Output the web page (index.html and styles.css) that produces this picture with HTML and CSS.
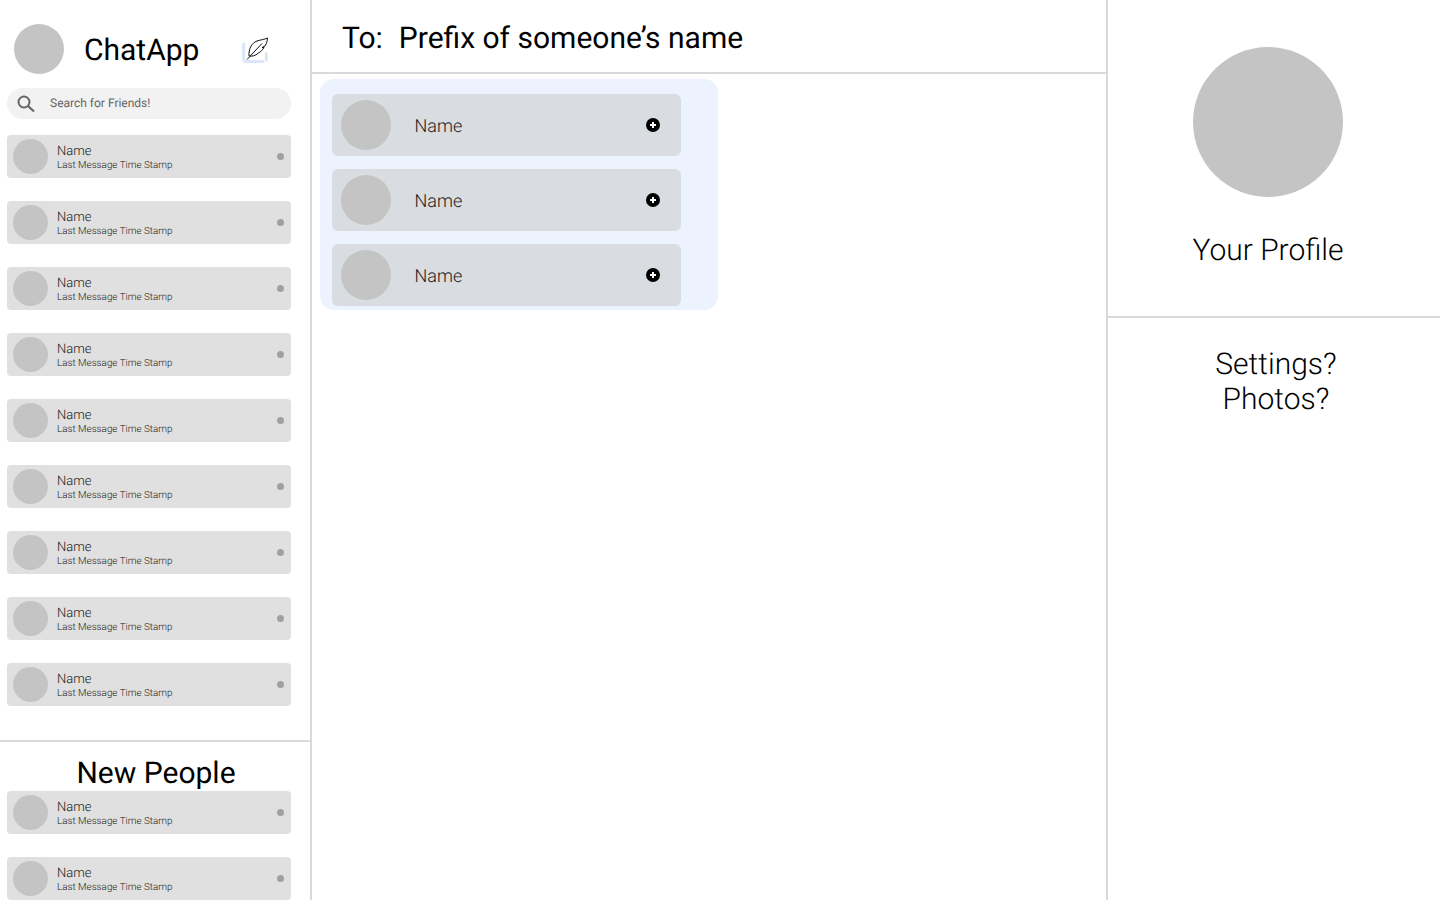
FILE: index.html
```html
<!DOCTYPE html>
<html lang="en">
<head>
    <meta charset="UTF-8">
    <meta name="viewport" content="width=device-width, initial-scale=1.0">
    <title>ChatApp</title>
    <link rel="stylesheet" href="styles.css">
</head>
<body>
    <div class="app">
        <aside class="sidebar">
            <div class="friends">
                <div class="brand">
                    <div class="avatar avatar-brand"></div>
                    <h1>ChatApp</h1>
                    <button class="compose" aria-label="New message">
                        <svg width="30" height="30" viewBox="0 0 30 30" fill="none">
                            <path d="M3.700 10V25.500Q3.700 27.500 5.700 27.500H23" stroke="#dbe6f8" stroke-width="3" stroke-linecap="round"/>
                            <path d="M26.300 19.500V26" stroke="#dbe6f8" stroke-width="3" stroke-linecap="round"/>
                            <path d="M7 25.500L22 9.500" stroke="#111" stroke-width="1"/>
                            <path d="M9 22C8.500 15 11.500 9 17 7C20.500 5.800 24.500 5.500 27.500 4C27.300 7 26.500 9.500 25 12L22 13.500H24C22.500 16 21 17.500 18.500 19C15 22 12 22.500 9 22Z" stroke="#111" stroke-width="1" stroke-linejoin="round"/>
                        </svg>
                    </button>
                </div>
                <div class="search">
                    <svg width="20" height="20" viewBox="0 0 20 20" fill="none">
                        <circle cx="8" cy="8" r="5.500" stroke="#666" stroke-width="2"/>
                        <path d="M12 12L18 17.500" stroke="#666" stroke-width="2.200"/>
                    </svg>
                    <span>Search for Friends!</span>
                </div>
                <ul class="chat-list">
                    <li class="chat-row"><div class="avatar"></div><div class="chat-text"><div class="chat-name">Name</div><div class="chat-last">Last Message Time Stamp</div></div><div class="dot"></div></li>
                    <li class="chat-row"><div class="avatar"></div><div class="chat-text"><div class="chat-name">Name</div><div class="chat-last">Last Message Time Stamp</div></div><div class="dot"></div></li>
                    <li class="chat-row"><div class="avatar"></div><div class="chat-text"><div class="chat-name">Name</div><div class="chat-last">Last Message Time Stamp</div></div><div class="dot"></div></li>
                    <li class="chat-row"><div class="avatar"></div><div class="chat-text"><div class="chat-name">Name</div><div class="chat-last">Last Message Time Stamp</div></div><div class="dot"></div></li>
                    <li class="chat-row"><div class="avatar"></div><div class="chat-text"><div class="chat-name">Name</div><div class="chat-last">Last Message Time Stamp</div></div><div class="dot"></div></li>
                    <li class="chat-row"><div class="avatar"></div><div class="chat-text"><div class="chat-name">Name</div><div class="chat-last">Last Message Time Stamp</div></div><div class="dot"></div></li>
                    <li class="chat-row"><div class="avatar"></div><div class="chat-text"><div class="chat-name">Name</div><div class="chat-last">Last Message Time Stamp</div></div><div class="dot"></div></li>
                    <li class="chat-row"><div class="avatar"></div><div class="chat-text"><div class="chat-name">Name</div><div class="chat-last">Last Message Time Stamp</div></div><div class="dot"></div></li>
                    <li class="chat-row"><div class="avatar"></div><div class="chat-text"><div class="chat-name">Name</div><div class="chat-last">Last Message Time Stamp</div></div><div class="dot"></div></li>
                </ul>
            </div>
            <div class="new-people">
                <h2>New People</h2>
                <ul class="chat-list">
                    <li class="chat-row"><div class="avatar"></div><div class="chat-text"><div class="chat-name">Name</div><div class="chat-last">Last Message Time Stamp</div></div><div class="dot"></div></li>
                    <li class="chat-row"><div class="avatar"></div><div class="chat-text"><div class="chat-name">Name</div><div class="chat-last">Last Message Time Stamp</div></div><div class="dot"></div></li>
                </ul>
            </div>
        </aside>

        <main class="compose-pane">
            <header class="to-bar">
                <span class="to-label">To:</span>
                <span class="to-value">Prefix of someone’s name</span>
            </header>
            <ul class="suggestions">
                <li class="suggestion"><div class="avatar avatar-large"></div><span class="suggestion-name">Name</span><span class="add-icon"></span></li>
                <li class="suggestion"><div class="avatar avatar-large"></div><span class="suggestion-name">Name</span><span class="add-icon"></span></li>
                <li class="suggestion"><div class="avatar avatar-large"></div><span class="suggestion-name">Name</span><span class="add-icon"></span></li>
            </ul>
        </main>

        <aside class="details">
            <section class="profile">
                <div class="avatar avatar-profile"></div>
                <h2>Your Profile</h2>
            </section>
            <section class="extras">Settings?<br>Photos?</section>
        </aside>
    </div>
</body>
</html>
```

FILE: styles.css
```css
* {
    box-sizing: border-box;
}

html, body {
    height: 100%;
    margin: 0;
    overflow: hidden;
}

body {
    font-family: Roboto, Arial, sans-serif;
    background-color: #fff;
    color: #000;
    text-rendering: geometricPrecision;
}

ul {
    list-style-type: none;
    margin: 0;
    padding: 0;
}

h1, h2 {
    margin: 0;
    font-weight: 400;
}

.app {
    display: flex;
    height: 900px;
}

.avatar {
    flex: none;
    width: 35px;
    height: 35px;
    border-radius: 50%;
    background-color: #c4c4c4;
}

/* left column */
.sidebar {
    flex: none;
    display: flex;
    flex-direction: column;
    width: 312px;
    border-right: 2px solid #d9d9d9;
}

.friends {
    flex: none;
    height: 742px;
    padding: 24px 19px 0 7px;
    border-bottom: 2px solid #d9d9d9;
}

.brand {
    display: flex;
    align-items: center;
    height: 50px;
    padding-left: 7px;
}

.avatar-brand {
    width: 50px;
    height: 50px;
}

.brand h1 {
    margin-left: 20px;
    padding-top: 4px;
    font-size: 30px;
    line-height: 50px;
}

.compose {
    margin-left: 41px;
    padding: 0;
    border: none;
    background: none;
    line-height: 0;
}

.search {
    display: flex;
    align-items: center;
    height: 31px;
    margin-top: 14px;
    padding-left: 9px;
    border-radius: 16px;
    background-color: #f2f2f2;
    color: #666;
    font-size: 12px;
}

.search span {
    margin-left: 14px;
    padding-bottom: 2px;
}

.chat-list {
    display: flex;
    flex-direction: column;
    gap: 23px;
}

.friends .chat-list {
    margin-top: 16px;
}

.chat-row {
    flex: none;
    display: flex;
    align-items: center;
    height: 43px;
    padding: 0 7px 0 6px;
    border-radius: 4px;
    background-color: #e0e0e0;
}

.chat-text {
    flex: 1;
    margin-left: 9px;
    padding-top: 3px;
    color: #1a1a1a;
    font-weight: 300;
}

.chat-name {
    font-size: 13px;
    line-height: 15px;
}

.chat-last {
    margin-top: 1px;
    font-size: 9.850px;
    line-height: 12px;
}

.dot {
    width: 7px;
    height: 7px;
    border-radius: 50%;
    background-color: #a0a0a0;
}

.new-people {
    padding: 0 19px 0 7px;
}

.new-people h2 {
    height: 49px;
    padding: 14px 0 0 14px;
    font-size: 30px;
    line-height: 35px;
    text-align: center;
}

/* middle column */
.compose-pane {
    flex: none;
    width: 796px;
    border-right: 2px solid #d9d9d9;
}

.to-bar {
    display: flex;
    align-items: center;
    height: 74px;
    padding: 4px 0 0 30px;
    border-bottom: 2px solid #d9d9d9;
}

.to-label {
    font-size: 30px;
    font-weight: 400;
}

.to-value {
    margin-left: 16px;
    font-size: 30px;
    font-weight: 400;
}

.suggestions {
    display: flex;
    flex-direction: column;
    gap: 13px;
    width: 398px;
    height: 231px;
    margin: 5px 0 0 8px;
    padding: 15px 0 0 12px;
    border-radius: 14px;
    background-color: #ecf2fe;
}

.suggestion {
    display: flex;
    align-items: center;
    width: 349px;
    height: 62px;
    padding-left: 9px;
    border-radius: 6px;
    background-color: #d9dce1;
}

.avatar-large {
    width: 50px;
    height: 50px;
}

.suggestion-name {
    flex: 1;
    margin-left: 23.500px;
    padding-top: 2px;
    color: #1a1a1a;
    font-size: 18px;
    font-weight: 300;
}

.add-icon {
    position: relative;
    width: 14px;
    height: 14px;
    margin-right: 21px;
    border-radius: 50%;
    background-color: #000;
}

.add-icon::before,
.add-icon::after {
    content: "";
    position: absolute;
    background-color: #fff;
}

.add-icon::before {
    left: 4px;
    top: 6px;
    width: 6px;
    height: 2px;
}

.add-icon::after {
    left: 6px;
    top: 4px;
    width: 2px;
    height: 6px;
}

/* right column */
.details {
    flex: 1;
}

.profile {
    display: flex;
    flex-direction: column;
    align-items: center;
    height: 318px;
    padding: 47px 12px 0 0;
    border-bottom: 2px solid #d9d9d9;
}

.avatar-profile {
    width: 150px;
    height: 150px;
}

.profile h2 {
    margin-top: 36px;
    font-size: 30px;
    font-weight: 300;
    line-height: 35px;
}

.extras {
    padding: 29px 0 0 4px;
    font-size: 30px;
    font-weight: 300;
    line-height: 35px;
    text-align: center;
}
```
